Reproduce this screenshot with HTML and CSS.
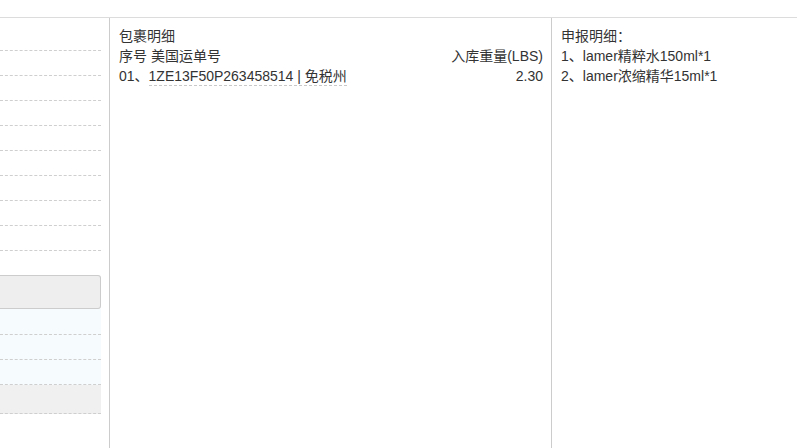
FILE: index.html
```html
<!DOCTYPE html>
<html lang="zh-CN">
<head>
<meta charset="utf-8">
<title>包裹明细</title>
<link rel="stylesheet" href="styles.css">
</head>
<body>
<div class="page">
  <div class="table">
    <div class="left">
      <div class="cell cell-first"></div>
      <div class="cell"></div>
      <div class="cell"></div>
      <div class="cell"></div>
      <div class="cell"></div>
      <div class="cell"></div>
      <div class="cell"></div>
      <div class="cell"></div>
      <div class="cell"></div>
      <div class="gap"></div>
      <div class="box"></div>
      <div class="cell blue blue-first"></div>
      <div class="cell blue"></div>
      <div class="cell blue"></div>
      <div class="cell grey"></div>
    </div>
    <div class="middle">
      <div class="line">包裹明细</div>
      <div class="line split">
        <span>序号 美国运单号</span>
        <span>入库重量(LBS)</span>
      </div>
      <div class="line split">
        <span>01、<span class="track">1ZE13F50P263458514 | 免税州</span></span>
        <span>2.30</span>
      </div>
    </div>
    <div class="right">
      <div class="line">申报明细：</div>
      <div class="line">1、lamer精粹水150ml*1</div>
      <div class="line">2、lamer浓缩精华15ml*1</div>
    </div>
  </div>
</div>
</body>
</html>
```
FILE: styles.css
```css
html, body {
  margin: 0;
  padding: 0;
  background: #fff;
}
body {
  font-family: "Liberation Sans", "Noto Sans CJK SC", sans-serif;
  font-size: 14px;
  color: #333;
}
.page {
  padding-top: 17px;
  height: 448px;
  box-sizing: border-box;
  overflow: hidden;
}
.table {
  display: flex;
  border-top: 1px solid #dcdcdc;
  height: 431px;
  box-sizing: border-box;
}
.left {
  width: 101px;
  margin-right: 8px;
  display: flex;
  flex-direction: column;
  flex: none;
}
.cell {
  height: 24px;
  border-bottom: 1px dashed #cfcfcf;
  flex: none;
}
.cell-first {
  height: 32px;
}
.gap {
  height: 24px;
  flex: none;
}
.box {
  height: 32px;
  background: #eeeeee;
  border: 1px solid #cccccc;
  border-left: none;
  border-radius: 0 3px 3px 0;
  flex: none;
}
.blue {
  background: #f6fbfe;
}
.blue-first {
  height: 25px;
}
.grey {
  background: #f0f0f0;
  height: 28px;
}
.middle {
  width: 441px;
  flex: none;
  border-left: 1px solid #cccccc;
  border-right: 1px solid #cccccc;
  padding: 8px 8px 0 9px;
  box-sizing: content-box;
}
.middle {
  width: 424px;
}
.right {
  flex: 1;
  padding: 8px 9px 0 9px;
}
.line {
  line-height: 20px;
  height: 20px;
  white-space: nowrap;
}
.split {
  display: flex;
  justify-content: space-between;
}
.track {
  border-bottom: 1px dashed #c8c8c8;
  padding-bottom: 1px;
}
```
